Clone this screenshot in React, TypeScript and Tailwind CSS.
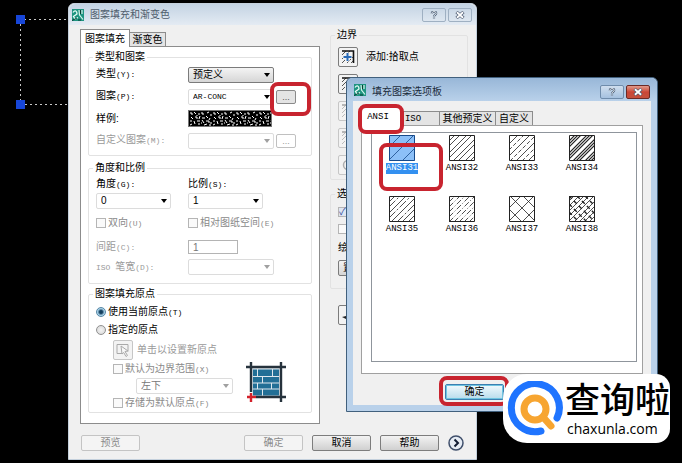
import clsx from "clsx";
import { useState } from "react";

type BoxProps = { className?: string; children?: React.ReactNode };

function Caption(props: { text: string; hint?: string }) {
  return (
    <>
      {props.text}
      {props.hint && (
        <span className="font-['Liberation_Mono',monospace] text-[8px]">
          {props.hint}
        </span>
      )}
    </>
  );
}

function Group(props: BoxProps & { title: string }) {
  return (
    <fieldset
      className={clsx(
        "min-w-0 rounded-xs border border-[#e2e2e2] px-[7px]",
        props.className,
      )}
    >
      <legend className="-ml-[3px] h-3 px-0.5 leading-3">{props.title}</legend>
      {props.children}
    </fieldset>
  );
}

function Ring(props: BoxProps) {
  return (
    <span
      className={clsx(
        "pointer-events-none absolute z-10 rounded-lg border-4 border-[#c8242f]",
        props.className,
      )}
    />
  );
}

type PickProps = {
  id: string;
  value: string;
  label?: string;
  disabled?: boolean;
  raised?: boolean;
  mono?: boolean;
  className?: string;
};

function Pick(props: PickProps) {
  return (
    <span className={clsx("relative block h-4", props.className)}>
      <select
        id={props.id}
        aria-label={props.label}
        disabled={props.disabled}
        className={clsx(
          "block h-4 w-full appearance-none rounded-xs border px-1 leading-3 opacity-100",
          props.raised
            ? "border-[#7b7b7b] bg-linear-to-b from-[#f4f4f4] to-[#d6d6d6]"
            : "border-[#dcdcdc] bg-white",
          props.disabled && "border-[#bdbdbd] text-[#777]",
          props.mono && "font-['Liberation_Mono',monospace] text-[8px]",
        )}
      >
        <option>{props.value}</option>
      </select>
      <svg
        viewBox="0 0 6 4"
        className={clsx(
          "pointer-events-none absolute top-1.5 right-1 h-1 w-1.5",
          props.disabled ? "fill-[#a0a0a0]" : "fill-black",
        )}
      >
        <path d="M0 0h6L3 4z" />
      </svg>
    </span>
  );
}

function Check(props: {
  text: string;
  hint?: string;
  checked?: boolean;
  className?: string;
}) {
  return (
    <label
      className={clsx(
        "flex items-center gap-0.5 whitespace-nowrap text-[#8a8a8a]",
        props.className,
      )}
    >
      <input
        type="checkbox"
        disabled
        aria-label={props.text ? undefined : "选项"}
        defaultChecked={props.checked}
        className="size-2.5 shrink-0 appearance-none border border-[#b5b5b5] bg-[#fafafa] leading-2 text-[#2f4f9a] checked:bg-[#dfe6f2] checked:before:block checked:before:content-['✓']"
      />
      {props.text && (
        <span>
          <Caption text={props.text} hint={props.hint} />
        </span>
      )}
    </label>
  );
}

function Radio(props: {
  text: string;
  hint?: string;
  checked: boolean;
  onChange: () => void;
}) {
  return (
    <label className="flex items-center gap-0.5 whitespace-nowrap">
      <input
        type="radio"
        name="origin"
        checked={props.checked}
        onChange={props.onChange}
        className="size-2.5 appearance-none rounded-full border border-[#909090] bg-radial from-[#f4f4f4] to-[#d4d4d4] checked:border-[#5787a5] checked:from-[#123f5e] checked:from-25% checked:to-[#a9d3ea] checked:to-60%"
      />
      <span>
        <Caption text={props.text} hint={props.hint} />
      </span>
    </label>
  );
}

function PushButton(
  props: BoxProps & { disabled?: boolean; primary?: boolean },
) {
  return (
    <button
      type="button"
      disabled={props.disabled}
      className={clsx(
        "h-4 w-[59px] rounded-xs border leading-3 whitespace-nowrap",
        props.disabled && "border-[#c4c4c4] bg-[#f4f4f4] text-[#8a8a8a]",
        props.primary &&
          "border-[#3c7fb1] bg-linear-to-b from-[#f2fafd] to-[#b8dcec] ring-1 ring-[#6fc4e0] ring-inset",
        !props.disabled &&
          !props.primary &&
          "border-[#7d7d7d] bg-linear-to-b from-[#f3f3f3] to-[#d0d0d0]",
        props.className,
      )}
    >
      {props.children}
    </button>
  );
}

function AppIcon() {
  return (
    <svg viewBox="0 0 12 12" className="size-3 shrink-0" fill="none">
      <path d="M0 0h12v12H0z" fill="#1f9480" />
      <path d="M1 3.5C3 .5 5 2 5 5L1.500 7.500 3 10 6 8.500" stroke="#e9fff8" strokeWidth="1.3" />
      <path d="M7 1l.5 5 3.500 4.500M10 1v4" stroke="#d5f5ec" strokeWidth="1.2" />
      <path d="M0 11.500L5 9M8.500 1v4M6 11h3" stroke="#073d33" />
    </svg>
  );
}

function HelpGlyph() {
  return (
    <svg viewBox="0 0 8 8" className="mx-auto size-2" fill="none">
      <path
        d="M1.8 2.6C1.8 0 6.2 0 6.2 2.3 6.2 3.8 4 3.8 4 5.4M4 6.4v1.2"
        stroke="#4c6079"
        strokeWidth="2.2"
      />
      <path
        d="M1.8 2.6C1.8 0 6.2 0 6.2 2.3 6.2 3.8 4 3.8 4 5.4M4 6.6v.8"
        stroke="#fff"
        strokeWidth="0.9"
      />
    </svg>
  );
}

function CloseGlyph() {
  return (
    <svg viewBox="0 0 9 8" className="mx-auto h-2 w-2.5" fill="none">
      <path d="M1 1l7 6M8 1L1 7" stroke="#4c5a70" strokeWidth="3.2" />
      <path d="M1.4 1.3l6.2 5.4M7.6 1.3L1.4 6.7" stroke="#fff" strokeWidth="1.8" />
    </svg>
  );
}

function PickIcon(props: { kind: string; faded?: boolean }) {
  return (
    <button
      type="button"
      aria-label={props.kind}
      disabled={props.faded}
      className={clsx(
        "flex size-5 items-center justify-center rounded-xs border bg-[#f3f3f3]",
        props.faded ? "border-[#c6c6c6]" : "border-[#7c7c7c]",
      )}
    >
      <svg
        viewBox="0 0 14 14"
        className={clsx("size-3.5", props.faded && "opacity-35")}
        fill="none"
      >
        {props.kind === "view" && (
          <circle cx="7" cy="7" r="4.5" stroke="#333" strokeWidth="1.5" />
        )}
        {props.kind === "origin" && (
          <>
            <path d="M1 1.5h11v7M1 1.5v9h5" stroke="#222" />
            <path
              d="M5 3l7 5-3 .5 2.5 4-1.5 1-2.3-4L6 11z"
              fill="#fff"
              stroke="#222"
            />
          </>
        )}
        {props.kind === "inherit" && (
          <path d="M1 9l4-1 2-5 2 4 4 2-5 1-1 3-2-2z" fill="#222" />
        )}
        {props.kind !== "view" &&
          props.kind !== "origin" &&
          props.kind !== "inherit" && (
            <>
              <path
                d="M1 5l4-4M1 9l8-8M1 13l3-3M6 13l6-6M10 13l2-2"
                stroke="#555"
              />
              <path d="M1 1h11.5v12" stroke="#111" strokeWidth="1.6" />
            </>
          )}
        {props.kind === "points" && (
          <>
            <path d="M6.500 2.500v9M2 7h9" stroke="#f3f3f3" strokeWidth="4" />
            <path d="M6.500 3v8M2.500 7h8" stroke="#2b6cb8" strokeWidth="2" />
          </>
        )}
      </svg>
    </button>
  );
}

function ConcreteSample() {
  return (
    <svg className="h-[17px] w-[84px] border border-[#777] bg-black">
      <defs>
        <pattern id="conc" width="23" height="15" patternUnits="userSpaceOnUse">
          <path
            d="M1 2h2v2M5 1l2 2M9 3h2M13 1v2h2M18 2l2-1M21 4h2M2 6l2 2M6 6h2v2M11 5l-1 3M13 7h3M17 5l2 2M21 7l-1 2M1 10h2M5 10l1 3M8 10h3M13 9l2 3M17 10h3v2M22 11v2M3 13l-2 1M9 13h2M15 14l3-1M8 5v-1M12 12h1M20 14h2"
            stroke="#fff"
            strokeWidth="1"
            fill="none"
          />
        </pattern>
      </defs>
      <rect width="84" height="17" fill="url(#conc)" />
    </svg>
  );
}

function BrickIcon() {
  return (
    <svg viewBox="0 0 40 40" className="size-10">
      <path d="M6 6h28v28H6z" fill="#dfe8ee" />
      <g fill="#226f96">
        <path d="M7 7.500h4v6.500H7zM12 7.500h14v6.500H12zM27 7.500h6v6.500h-6z" />
        <path d="M7 15h9v5.500H7zM17 15h16v5.500H17z" />
        <path d="M7 21.500h4v5H7zM12 21.500h13v5H12zM26 21.500h7v5h-7z" />
        <path d="M7 27.500h9v6H7zM17 27.500h16v6H17z" />
      </g>
      <path
        d="M0 5h40M5 0v30M35 0v40M10 35h30"
        stroke="#26323c"
        strokeWidth="2.4"
      />
      <path d="M1 35h9M5 31v9" stroke="#d3202a" strokeWidth="2.4" />
    </svg>
  );
}

type Hatch = {
  name: string;
  lines: string;
  extra?: string;
  dash?: string;
  width?: number;
};

const hatches: Hatch[] = [
  { name: "ANSI31", lines: "M0 12L12 0M0 25L25 0M13 26L26 13" },
  { name: "ANSI32", lines: "M0 6L6 0M0 11L11 0M0 18L18 0M0 23L23 0M4 26L26 4M9 26L26 9M16 26L26 16M21 26L26 21" },
  { name: "ANSI33", lines: "M0 9L9 0M0 21L21 0M7 26L26 7M19 26L26 19", extra: "M0 15L15 0M1 26L26 1M13 26L26 13", dash: "4 2" },
  { name: "ANSI34", lines: "M0 6L6 0M0 9L9 0M0 12L12 0M0 18L18 0M0 21L21 0M0 24L24 0M4 26L26 4M7 26L26 7M10 26L26 10M16 26L26 16M19 26L26 19M22 26L26 22", width: 1.1 },
  { name: "ANSI35", lines: "M0 6L6 0M0 17L17 0M2 26L26 2M13 26L26 13", extra: "M0 11L11 0M0 22L22 0M8 26L26 8M19 26L26 19", dash: "9 2 2 2" },
  { name: "ANSI36", lines: "", extra: "M0 6L6 0M0 11L11 0M0 16L16 0M0 21L21 0M0 26L26 0M5 26L26 5M10 26L26 10M15 26L26 15M20 26L26 20", dash: "6 2 1 2" },
  { name: "ANSI37", lines: "M0 12L12 0M0 25L25 0M13 26L26 13M14 0L26 12M1 0L26 25M0 13L13 26" },
  { name: "ANSI38", lines: "M0 5L5 0M0 10L10 0M0 15L15 0M0 20L20 0M0 25L25 0M5 26L26 5M10 26L26 10M15 26L26 15M20 26L26 20", extra: "M16 0L26 10M8 0L26 18M0 0L26 26M0 8L18 26M0 16L10 26", dash: "4 3" },
];

function Swatch(props: { hatch: Hatch; active: boolean }) {
  const { hatch, active } = props;
  return (
    <svg
      viewBox="0 0 26 26"
      className={clsx("size-[26px]", active ? "bg-[#8cc0f8]" : "bg-white")}
      fill="none"
      stroke={active ? "#174a8a" : "#222"}
    >
      <path d={hatch.lines} strokeWidth={hatch.width ?? 0.8} />
      {hatch.extra && (
        <path
          d={hatch.extra}
          strokeWidth={hatch.name === "ANSI38" ? 1.4 : 0.8}
          strokeDasharray={hatch.dash}
        />
      )}
      <path d="M.5.5h25v25H.5z" />
    </svg>
  );
}

function HatchDialog() {
  const [origin, setOrigin] = useState("current");

  return (
    <section className="absolute top-[3px] right-[205px] left-[68px] rounded-t-md border border-[#c4d0dc] bg-[#f0f0f0]">
      <header className="flex h-[21px] items-center gap-1.5 rounded-t-md bg-linear-to-b from-[#c3d3e3] to-[#e4ebf3] pr-1 pl-[3px] text-[#4f5d6c]">
        <AppIcon />
        <h1 className="flex-1">图案填充和渐变色</h1>
        <button
          type="button"
          aria-label="帮助"
          className="h-3.5 w-6 rounded-xs border border-[#9fb0c2]"
        >
          <HelpGlyph />
        </button>
        <button
          type="button"
          aria-label="关闭"
          className="-ml-1 h-3.5 w-6 rounded-xs border border-[#9fb0c2]"
        >
          <CloseGlyph />
        </button>
      </header>

      <div className="flex gap-2.5 pr-2 pl-[11px]">
        <div className="w-60 shrink-0 pt-1">
          <nav className="flex items-end">
            <button
              type="button"
              className="relative -mb-px h-[18px] w-[50px] border border-b-0 border-[#8c8c8c] bg-white leading-3"
            >
              图案填充
            </button>
            <button
              type="button"
              className="h-3.5 w-9 border border-b-0 border-l-0 border-[#8c8c8c] bg-[#e4e4e4] leading-3"
            >
              渐变色
            </button>
          </nav>

          <div className="border border-[#8c8c8c] bg-white px-[7px] pt-1 pb-2.5">
            <Group title="类型和图案" className="pb-1">
              <div className="grid auto-rows-[21px] grid-cols-[92px_86px_1fr] items-center gap-y-px pt-px">
                <label htmlFor="type">
                  <Caption text="类型" hint="(Y):" />
                </label>
                <Pick id="type" value="预定义" raised />
                <span />
                <label htmlFor="pattern">
                  <Caption text="图案" hint="(P):" />
                </label>
                <Pick id="pattern" value="AR-CONC" mono />
                <span className="relative pl-0.5">
                  <button
                    type="button"
                    className="block h-3.5 w-5 rounded-xs border border-[#8a8a8a] bg-[#e4e4e4] text-[9px] leading-2 text-[#555]"
                  >
                    ...
                  </button>
                  <Ring className="-top-2 -left-1 h-[34px] w-[41px]" />
                </span>
                <span>样例:</span>
                <ConcreteSample />
                <span />
                <label htmlFor="custom" className="text-[#9a9a9a]">
                  <Caption text="自定义图案" hint="(M):" />
                </label>
                <Pick id="custom" value="" disabled />
                <span className="pl-0.5">
                  <button
                    type="button"
                    disabled
                    className="block h-3.5 w-5 rounded-xs border border-[#c0c0c0] text-[9px] leading-2 text-[#999]"
                  >
                    ...
                  </button>
                </span>
              </div>
            </Group>

            <Group title="角度和比例" className="mt-1.5 pb-1.5">
              <div className="grid grid-cols-[92px_1fr] items-center">
                <label htmlFor="angle" className="h-[19px] leading-5">
                  <Caption text="角度" hint="(G):" />
                </label>
                <label htmlFor="scale" className="h-[19px] leading-5">
                  <Caption text="比例" hint="(S):" />
                </label>
                <Pick id="angle" value="0" className="w-[75px]" />
                <Pick id="scale" value="1" className="w-[75px]" />
                <Check text="双向" hint="(U)" className="h-7" />
                <Check text="相对图纸空间" hint="(E)" className="h-7" />
                <label htmlFor="spacing" className="text-[#9a9a9a]">
                  <Caption text="间距" hint="(C):" />
                </label>
                <span className="flex h-5 items-center">
                  <input
                    id="spacing"
                    disabled
                    defaultValue="1"
                    className="h-3.5 w-[50px] border border-[#b4b4b4] bg-white px-1 leading-3 text-[#777]"
                  />
                </span>
                <label htmlFor="pen" className="text-[#9a9a9a]">
                  <span className="font-['Liberation_Mono',monospace] text-[8px]">
                    ISO{" "}
                  </span>
                  <Caption text="笔宽" hint="(D):" />
                </label>
                <span className="flex h-5 items-center">
                  <Pick id="pen" value="" disabled className="w-[86px]" />
                </span>
              </div>
            </Group>

            <Group title="图案填充原点" className="mt-1 pt-1">
              <div className="flex flex-col gap-0.5 *:h-4">
                <Radio
                  text="使用当前原点"
                  hint="(T)"
                  checked={origin === "current"}
                  onChange={() => setOrigin("current")}
                />
                <Radio
                  text="指定的原点"
                  checked={origin === "given"}
                  onChange={() => setOrigin("given")}
                />
              </div>
              <div className="flex items-end justify-between pt-0.5 pr-[18px] pl-[17px]">
                <div>
                  <div className="flex items-center gap-1 text-[#9a9a9a]">
                    <PickIcon kind="origin" faded />
                    单击以设置新原点
                  </div>
                  <Check
                    text="默认为边界范围"
                    hint="(X)"
                    className="h-[18px]"
                  />
                  <Pick
                    id="corner"
                    label="默认为边界范围"
                    value="左下"
                    disabled
                    className="ml-[23px] w-[97px]"
                  />
                  <Check
                    text="存储为默认原点"
                    hint="(F)"
                    className="h-[18px]"
                  />
                </div>
                <div className="pb-2.5">
                  <BrickIcon />
                </div>
              </div>
            </Group>
          </div>
        </div>

        <div className="min-w-0 flex-1 pt-1">
          <Group title="边界" className="pb-1">
            <div className="flex flex-col gap-[7px] pt-1.5">
              <div className="flex items-center gap-2">
                <PickIcon kind="points" />
                添加:拾取点
              </div>
              <PickIcon kind="select" />
              <PickIcon kind="remove" faded />
              <PickIcon kind="recreate" faded />
              <PickIcon kind="view" faded />
            </div>
          </Group>
          <Group title="选项" className="mt-2 pb-3">
            <Check text="" checked className="h-6" />
            <Check text="" className="h-2.5" />
            <label htmlFor="order" className="block h-[26px] leading-7">
              绘图次序
            </label>
            <Pick id="order" value="置于边界之后" raised />
          </Group>
          <div className="pt-4 pl-2">
            <PickIcon kind="inherit" />
          </div>
        </div>
      </div>

      <footer className="flex items-center gap-[9px] pt-[11px] pr-3 pb-2 pl-3">
        <PushButton disabled className="mr-auto">
          预览
        </PushButton>
        <PushButton disabled>确定</PushButton>
        <PushButton>取消</PushButton>
        <PushButton>帮助</PushButton>
        <button
          type="button"
          aria-label="更多选项"
          className="size-4 rounded-full"
        >
          <svg viewBox="0 0 16 16" fill="none" className="size-4">
            <circle cx="8" cy="8" r="7" fill="#e6ecf4" stroke="#3f4f6b" strokeWidth="1.5" />
            <path d="M6.500 4.500L10 8l-3.500 3.500" stroke="#111c33" strokeWidth="2" />
          </svg>
        </button>
      </footer>
    </section>
  );
}

function PaletteDialog() {
  const [selected, setSelected] = useState("ANSI31");

  return (
    <section className="absolute top-[77px] right-6 left-[346px] rounded-t-md border border-[#41607d] bg-[#b9d1ea] px-1.5 pb-1.5">
      <header className="-mx-1.5 flex h-[23px] items-center gap-1.5 rounded-t-md bg-linear-to-b from-[#98b7d8] to-[#b9d1ea] px-[7px] text-[#1c2c3c]">
        <AppIcon />
        <h2 className="flex-1 pt-1">填充图案选项板</h2>
        <button
          type="button"
          aria-label="帮助"
          className="mt-1 h-3.5 w-6 rounded-xs border border-[#6f8cab] bg-linear-to-b from-[#cfdeee] to-[#a5c1df]"
        >
          <HelpGlyph />
        </button>
        <button
          type="button"
          aria-label="关闭"
          className="mt-1 -ml-1 h-3.5 w-6 rounded-xs border border-[#6b2a26] bg-linear-to-b from-[#e09a8c] via-[#cb4636] to-[#c4503c]"
        >
          <CloseGlyph />
        </button>
      </header>

      <div className="bg-[#f0f0f0] px-2 pt-[7px] pb-[5px]">
        <nav className="relative flex items-end">
          <button
            type="button"
            className="relative -mb-px h-[18px] w-[42px] bg-white pr-2 font-['Liberation_Mono',monospace] text-[9px] leading-3"
          >
            ANSI
          </button>
          <button
            type="button"
            className="h-3.5 w-[37px] border-t border-r border-[#8c8c8c] bg-[#e4e4e4] pr-4 font-['Liberation_Mono',monospace] text-[9px] leading-3"
          >
            ISO
          </button>
          <button
            type="button"
            className="h-3.5 w-14 border-t border-r border-[#8c8c8c] bg-[#e4e4e4] leading-3"
          >
            其他预定义
          </button>
          <button
            type="button"
            className="h-3.5 w-[37px] border-t border-r border-[#8c8c8c] bg-[#e4e4e4] leading-3"
          >
            自定义
          </button>
          <Ring className="-top-1 -left-[3px] h-[30px] w-[46px]" />
        </nav>

        <div className="border border-[#a0a0a0] bg-white pt-1.5 pr-[5px] pb-[11px] pl-[9px]">
          <ul className="grid min-h-[230px] auto-rows-[61px] grid-cols-[repeat(4,60px)] border border-[#8f959c] pt-0.5">
            {hatches.map((hatch) => {
              const active = hatch.name === selected;
              return (
                <li key={hatch.name} className="relative">
                  <button
                    type="button"
                    onClick={() => setSelected(hatch.name)}
                    className="flex w-full flex-col items-center gap-0.5 font-['Liberation_Mono',monospace] text-[9px] leading-[11px]"
                  >
                    <Swatch hatch={hatch} active={active} />
                    <span
                      className={clsx(active && "bg-[#3390f0] text-white")}
                    >
                      {hatch.name}
                    </span>
                  </button>
                  {hatch.name === "ANSI31" && (
                    <Ring className="top-2 left-[7px] h-12 w-16" />
                  )}
                </li>
              );
            })}
          </ul>
        </div>

        <div className="flex pt-2.5 pl-[84px]">
          <span className="relative">
            <PushButton primary className="block">
              确定
            </PushButton>
            <Ring className="-top-2 -left-1.5 h-[30px] w-[70px]" />
          </span>
        </div>
      </div>
    </section>
  );
}

function SiteBadge() {
  return (
    <a
      href="#chaxunla"
      className="absolute top-[374px] right-3 z-20 flex h-[69px] w-[167px] items-center gap-0.5 rounded-l-[24px] rounded-r-[14px] bg-white pl-1 text-black"
    >
      <svg viewBox="0 0 56 56" className="size-14 shrink-0" fill="none">
        <path
          d="M50 37A24 24 0 1 0 34 50"
          stroke="#1f74ff"
          strokeWidth="7"
          strokeLinecap="round"
        />
        <circle cx="28" cy="28" r="11" stroke="#f7a531" strokeWidth="7" />
        <path
          d="M36 36l8 9"
          stroke="#f7a531"
          strokeWidth="7"
          strokeLinecap="round"
        />
      </svg>
      <span className="flex flex-col whitespace-nowrap">
        <span className="text-[35px] leading-10 font-medium">查询啦</span>
        <span className="pl-0.5 font-['Open_Sans',sans-serif] text-[14px] leading-4 font-medium">
          chaxunla.com
        </span>
      </span>
    </a>
  );
}

export default function App() {
  return (
    <main className="relative min-h-screen overflow-hidden bg-black font-['Liberation_Sans','Noto_Sans_CJK_SC',sans-serif] text-[10px] leading-3 text-black">
      <svg className="absolute top-3 left-3 h-28 w-16" fill="none">
        <path
          d="M64 7.500H8.500V92.500H64"
          stroke="#c8c8c8"
          strokeDasharray="2 3"
        />
        <path d="M4 3h9v9H4zM4 88h9v9H4z" fill="#1746d8" />
      </svg>
      <HatchDialog />
      <PaletteDialog />
      <SiteBadge />
    </main>
  );
}
